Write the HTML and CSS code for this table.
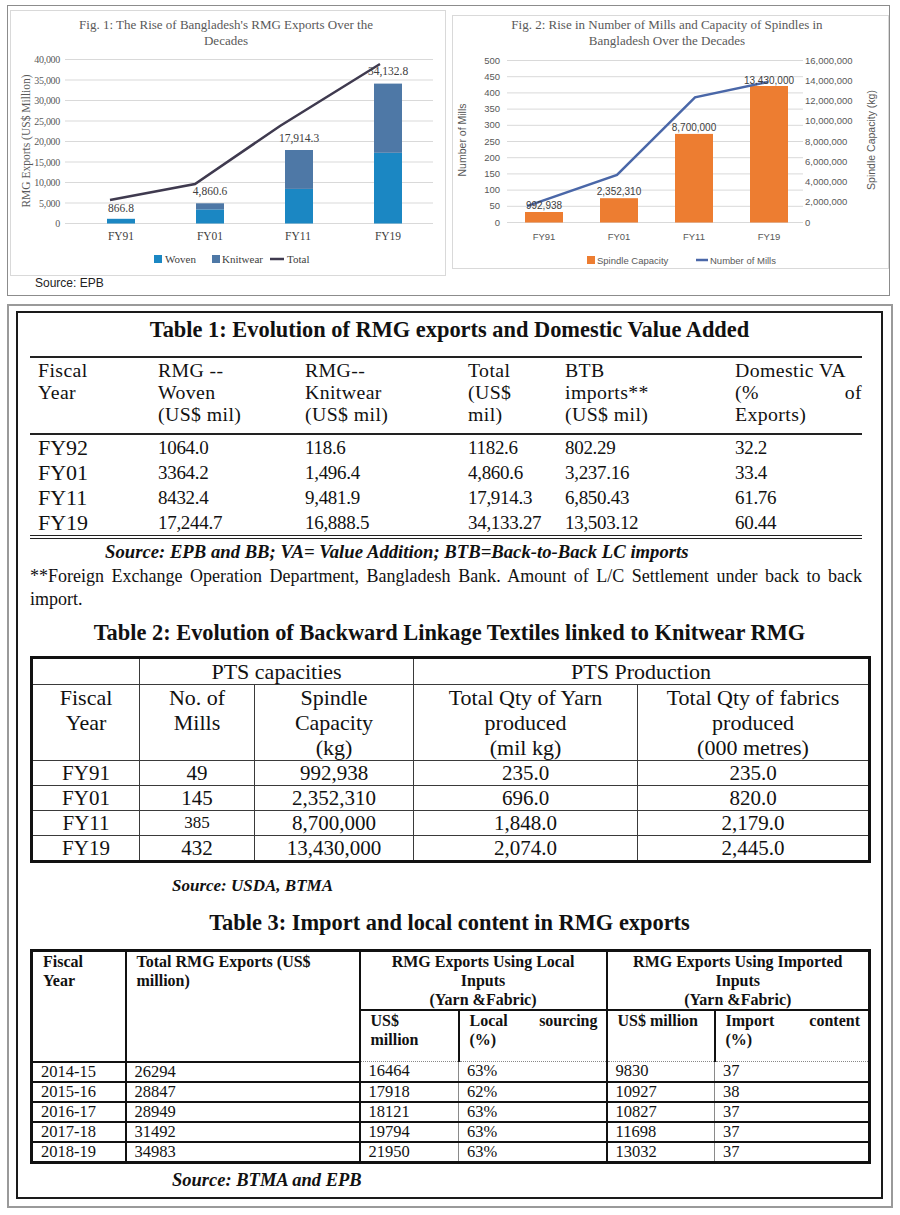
FILE: index.html
```html
<!DOCTYPE html>
<html lang="en">
<head>
<meta charset="utf-8">
<title>RMG exports</title>
<link rel="stylesheet" href="styles.css">
</head>
<body>
<div class="page">
  <div class="fig-frame">
    <div class="fig1">
      <svg class="chart" width="436" height="266" viewBox="0 0 436 266">
        <rect class="chart-box" x="0.5" y="0.5" width="435" height="265"/>
        <text class="c1-title" x="216" y="19">Fig. 1: The Rise of Bangladesh's RMG Exports Over the</text>
        <text class="c1-title" x="216" y="35">Decades</text>
        <g class="grid">
          <line x1="55" x2="423" y1="213.5" y2="213.5"/>
          <line x1="55" x2="423" y1="193" y2="193"/>
          <line x1="55" x2="423" y1="172.5" y2="172.5"/>
          <line x1="55" x2="423" y1="152" y2="152"/>
          <line x1="55" x2="423" y1="131.5" y2="131.5"/>
          <line x1="55" x2="423" y1="111" y2="111"/>
          <line x1="55" x2="423" y1="90.5" y2="90.5"/>
          <line x1="55" x2="423" y1="70" y2="70"/>
          <line x1="55" x2="423" y1="49.5" y2="49.5"/>
        </g>
        <g class="c1-ylab">
          <text x="50" y="217">0</text>
          <text x="50" y="196.5">5,000</text>
          <text x="50" y="176">10,000</text>
          <text x="50" y="155.5">15,000</text>
          <text x="50" y="135">20,000</text>
          <text x="50" y="114.5">25,000</text>
          <text x="50" y="94">30,000</text>
          <text x="50" y="73.5">35,000</text>
          <text x="50" y="53">40,000</text>
        </g>
        <text class="c1-axis-title" transform="translate(20,131) rotate(-90)">RMG Exports (US$ Million)</text>
        <rect class="woven" x="97" y="208.8" width="28" height="4.7"/>
        <rect class="woven" x="186" y="199.4" width="28" height="14.1"/>
        <rect class="knit" x="186" y="193.3" width="28" height="6.1"/>
        <rect class="woven" x="275" y="178.9" width="28" height="34.6"/>
        <rect class="knit" x="275" y="140" width="28" height="38.9"/>
        <rect class="woven" x="364" y="142.8" width="28" height="70.7"/>
        <rect class="knit" x="364" y="73.6" width="28" height="69.2"/>
        <polyline class="total-line" points="100,190 185,174 270,116 370,54"/>
        <g class="c1-val">
          <text x="111" y="202">866.8</text>
          <text x="200" y="185">4,860.6</text>
          <text x="289" y="132">17,914.3</text>
          <text x="378" y="65">34,132.8</text>
        </g>
        <g class="c1-xlab">
          <text x="111" y="230">FY91</text>
          <text x="200" y="230">FY01</text>
          <text x="288" y="230">FY11</text>
          <text x="378" y="230">FY19</text>
        </g>
        <rect class="woven" x="144" y="245" width="8" height="8"/>
        <text class="c1-leg" x="155" y="253">Woven</text>
        <rect class="knit" x="202" y="245" width="8" height="8"/>
        <text class="c1-leg" x="212" y="253">Knitwear</text>
        <line class="total-line" x1="260" x2="274" y1="249" y2="249"/>
        <text class="c1-leg" x="277" y="253">Total</text>
      </svg>
      <div class="fig-source">Source: EPB</div>
    </div>
    <div class="fig2">
      <svg class="chart" width="437" height="254" viewBox="0 0 437 254">
        <rect class="chart-box" x="0.5" y="0.5" width="436" height="253"/>
        <text class="c1-title" x="215" y="14">Fig. 2: Rise in Number of Mills and Capacity of Spindles in</text>
        <text class="c1-title" x="215" y="30">Bangladesh Over the Decades</text>
        <g class="grid">
          <line x1="55" x2="351" y1="207.5" y2="207.5"/>
          <line x1="55" x2="351" y1="191.3" y2="191.3"/>
          <line x1="55" x2="351" y1="175.1" y2="175.1"/>
          <line x1="55" x2="351" y1="158.9" y2="158.9"/>
          <line x1="55" x2="351" y1="142.7" y2="142.7"/>
          <line x1="55" x2="351" y1="126.5" y2="126.5"/>
          <line x1="55" x2="351" y1="110.3" y2="110.3"/>
          <line x1="55" x2="351" y1="94.1" y2="94.1"/>
          <line x1="55" x2="351" y1="77.9" y2="77.9"/>
          <line x1="55" x2="351" y1="61.7" y2="61.7"/>
          <line x1="55" x2="351" y1="45.5" y2="45.5"/>
        </g>
        <g class="c2-ylab">
          <text x="48" y="210.5">0</text>
          <text x="48" y="194.3">50</text>
          <text x="48" y="178.1">100</text>
          <text x="48" y="161.9">150</text>
          <text x="48" y="145.7">200</text>
          <text x="48" y="129.5">250</text>
          <text x="48" y="113.3">300</text>
          <text x="48" y="97.1">350</text>
          <text x="48" y="80.9">400</text>
          <text x="48" y="64.7">450</text>
          <text x="48" y="48.5">500</text>
        </g>
        <g class="c2-rlab">
          <text x="353" y="210.5">0</text>
          <text x="353" y="190.25">2,000,000</text>
          <text x="353" y="170">4,000,000</text>
          <text x="353" y="149.75">6,000,000</text>
          <text x="353" y="129.5">8,000,000</text>
          <text x="353" y="109.25">10,000,000</text>
          <text x="353" y="89">12,000,000</text>
          <text x="353" y="68.75">14,000,000</text>
          <text x="353" y="48.5">16,000,000</text>
        </g>
        <text class="c2-axis-title" transform="translate(14,125) rotate(-90)">Number of Mills</text>
        <text class="c2-axis-title" transform="translate(423,125) rotate(-90)">Spindle Capacity (kg)</text>
        <rect class="spindle" x="73" y="197" width="38" height="10.5"/>
        <rect class="spindle" x="148" y="183.2" width="38" height="24.3"/>
        <rect class="spindle" x="223" y="118.9" width="38" height="88.6"/>
        <rect class="spindle" x="298" y="71" width="38" height="136.5"/>
        <polyline class="mills-line" points="75,191.1 165,160 243,82.3 316,67"/>
        <g class="c2-val">
          <text x="92" y="194">992,938</text>
          <text x="167" y="180">2,352,310</text>
          <text x="242" y="116">8,700,000</text>
          <text x="317" y="69">13,430,000</text>
        </g>
        <g class="c2-xlab">
          <text x="92" y="225">FY91</text>
          <text x="167" y="225">FY01</text>
          <text x="242" y="225">FY11</text>
          <text x="317" y="225">FY19</text>
        </g>
        <rect class="spindle" x="135" y="241" width="8" height="8"/>
        <text class="c2-leg" x="145" y="249">Spindle Capacity</text>
        <line class="mills-line" x1="244" x2="256" y1="245" y2="245"/>
        <text class="c2-leg" x="258" y="249">Number of Mills</text>
      </svg>
    </div>
  </div>

  <div class="table-frame">
    <div class="table-inner">
      <div class="tbl-title">Table 1: Evolution of RMG exports and Domestic Value Added</div>
      <table class="t1">
        <colgroup>
          <col class="w120"><col class="w147"><col class="w163"><col class="w97"><col class="w170"><col class="w135">
        </colgroup>
        <thead>
          <tr>
            <th>Fiscal<br>Year</th>
            <th>RMG --<br>Woven<br>(US$ mil)</th>
            <th>RMG--<br>Knitwear<br>(US$ mil)</th>
            <th>Total<br>(US$<br>mil)</th>
            <th>BTB<br>imports**<br>(US$ mil)</th>
            <th class="last">Domestic VA<br><span class="just"><span>(%</span><span>of</span></span>Exports)</th>
          </tr>
        </thead>
        <tbody>
          <tr><td class="fy">FY92</td><td>1064.0</td><td>118.6</td><td>1182.6</td><td>802.29</td><td>32.2</td></tr>
          <tr><td class="fy">FY01</td><td>3364.2</td><td>1,496.4</td><td>4,860.6</td><td>3,237.16</td><td>33.4</td></tr>
          <tr><td class="fy">FY11</td><td>8432.4</td><td>9,481.9</td><td>17,914.3</td><td>6,850.43</td><td>61.76</td></tr>
          <tr><td class="fy">FY19</td><td>17,244.7</td><td>16,888.5</td><td>34,133.27</td><td>13,503.12</td><td>60.44</td></tr>
        </tbody>
      </table>
      <div class="src src1">Source: EPB and BB; VA= Value Addition; BTB=Back-to-Back LC imports</div>
      <p class="note">**Foreign Exchange Operation Department, Bangladesh Bank. Amount of L/C Settlement under back to back import.</p>

      <div class="tbl-title title2">Table 2: Evolution of Backward Linkage Textiles linked to Knitwear RMG</div>
      <table class="t2">
        <colgroup>
          <col class="w108"><col class="w115"><col class="w159"><col class="w224"><col class="w232">
        </colgroup>
        <thead>
          <tr class="grp-row"><th></th><th colspan="2">PTS capacities</th><th colspan="2">PTS Production</th></tr>
          <tr class="head-row">
            <th>Fiscal<br>Year</th>
            <th>No. of<br>Mills</th>
            <th>Spindle<br>Capacity<br>(kg)</th>
            <th>Total Qty of Yarn<br>produced<br>(mil kg)</th>
            <th>Total Qty of fabrics<br>produced<br>(000 metres)</th>
          </tr>
        </thead>
        <tbody>
          <tr><td>FY91</td><td>49</td><td>992,938</td><td>235.0</td><td>235.0</td></tr>
          <tr><td>FY01</td><td>145</td><td>2,352,310</td><td>696.0</td><td>820.0</td></tr>
          <tr><td>FY11</td><td class="small">385</td><td>8,700,000</td><td>1,848.0</td><td>2,179.0</td></tr>
          <tr><td>FY19</td><td>432</td><td>13,430,000</td><td>2,074.0</td><td>2,445.0</td></tr>
        </tbody>
      </table>
      <div class="src src2">Source: USDA, BTMA</div>

      <div class="tbl-title title3">Table 3: Import and local content in RMG exports</div>
      <table class="t3">
        <colgroup>
          <col class="w94"><col class="w234"><col class="w99"><col class="w148"><col class="w108"><col class="w155">
        </colgroup>
        <thead>
          <tr class="grp-row">
            <th rowspan="2">Fiscal<br>Year</th>
            <th rowspan="2">Total RMG Exports (US$<br>million)</th>
            <th colspan="2" class="grp">RMG Exports Using Local<br>Inputs<br>(Yarn &amp;Fabric)</th>
            <th colspan="2" class="grp">RMG Exports Using Imported<br>Inputs<br>(Yarn &amp;Fabric)</th>
          </tr>
          <tr class="sub-row">
            <th>US$<br>million</th>
            <th class="light"><span class="just"><span>Local</span><span>sourcing</span></span>(%)</th>
            <th>US$ million</th>
            <th class="light"><span class="just"><span>Import</span><span>content</span></span>(%)</th>
          </tr>
        </thead>
        <tbody>
          <tr><td>2014-15</td><td>26294</td><td>16464</td><td class="light">63%</td><td>9830</td><td class="light">37</td></tr>
          <tr><td>2015-16</td><td>28847</td><td>17918</td><td class="light">62%</td><td>10927</td><td class="light">38</td></tr>
          <tr><td>2016-17</td><td>28949</td><td>18121</td><td class="light">63%</td><td>10827</td><td class="light">37</td></tr>
          <tr><td>2017-18</td><td>31492</td><td>19794</td><td class="light">63%</td><td>11698</td><td class="light">37</td></tr>
          <tr><td>2018-19</td><td>34983</td><td>21950</td><td class="light">63%</td><td>13032</td><td class="light">37</td></tr>
        </tbody>
      </table>
      <div class="src src3">Source: BTMA and EPB</div>
    </div>
  </div>
</div>
</body>
</html>
```

FILE: styles.css
```css
* { box-sizing: border-box; }

body {
  margin: 0;
  background: #fff;
  color: #111;
  font-family: "Liberation Serif", "Times New Roman", serif;
}

.page { width: 900px; }

/* ---------- charts ---------- */
.fig-frame {
  margin: 5px 0 0 7px;
  width: 883px;
  height: 291px;
  border: 1px solid #8c8c8c;
  display: flex;
  align-items: flex-start;
}
.fig1 { margin: 4px 0 0 2px; width: 436px; }
.fig2 { margin: 9px 0 0 6px; }
.chart { display: block; }

.fig-source {
  margin-left: 25px;
  font-family: "Liberation Sans", Arial, sans-serif;
  font-size: 12px;
  line-height: 14px;
  color: #222;
}

.chart-box { fill: #fff; stroke: #d9d9d9; stroke-width: 1; }
.grid line { stroke: #d9d9d9; stroke-width: 1; }

.c1-title {
  font-family: "Liberation Serif", serif;
  font-size: 13px;
  fill: #595959;
  text-anchor: middle;
}
.c1-ylab text {
  font-family: "Liberation Serif", serif;
  font-size: 10px;
  letter-spacing: -0.3px;
  fill: #595959;
  text-anchor: end;
}
.c1-axis-title {
  font-family: "Liberation Serif", serif;
  font-size: 11.5px;
  fill: #595959;
  text-anchor: middle;
}
.c1-val text {
  font-family: "Liberation Serif", serif;
  font-size: 11.5px;
  fill: #404040;
  text-anchor: middle;
}
.c1-xlab text {
  font-family: "Liberation Serif", serif;
  font-size: 11.5px;
  fill: #404040;
  text-anchor: middle;
}
.c1-leg {
  font-family: "Liberation Serif", serif;
  font-size: 11px;
  fill: #404040;
}
.woven { fill: #1b87c3; }
.knit { fill: #4e78a6; }
.total-line { fill: none; stroke: #3f3a4f; stroke-width: 2.5; }

.c2-ylab text, .c2-rlab text {
  font-family: "Liberation Sans", Arial, sans-serif;
  font-size: 9.5px;
  fill: #595959;
}
.c2-ylab text { text-anchor: end; }
.c2-rlab text { text-anchor: start; }
.c2-axis-title {
  font-family: "Liberation Sans", Arial, sans-serif;
  font-size: 10.5px;
  fill: #595959;
  text-anchor: middle;
}
.c2-val text {
  font-family: "Liberation Sans", Arial, sans-serif;
  font-size: 10px;
  fill: #404040;
  text-anchor: middle;
}
.c2-xlab text {
  font-family: "Liberation Sans", Arial, sans-serif;
  font-size: 9.5px;
  fill: #595959;
  text-anchor: middle;
}
.c2-leg {
  font-family: "Liberation Sans", Arial, sans-serif;
  font-size: 9.5px;
  fill: #595959;
}
.spindle { fill: #ed7d31; }
.mills-line { fill: none; stroke: #4a67a8; stroke-width: 2.5; }

/* ---------- tables frame ---------- */
.table-frame {
  margin: 8px 0 0 7px;
  width: 886px;
  height: 904px;
  border: 2px solid #9a9a9a;
  padding: 5px 8px 7px 7px;
}
.table-inner {
  height: 100%;
  border: 2px solid #1a1a1a;
  padding: 5px 12px 0 12px;
}

.tbl-title {
  font-weight: bold;
  font-size: 22.4px;
  line-height: 24px;
  text-align: center;
  color: #111;
}
.title2 { margin-top: 10px; }
.title3 { margin-top: 14px; }

.src {
  font-weight: bold;
  font-style: italic;
  font-size: 18.7px;
  line-height: 22px;
}
.src1 { margin-top: 2px; padding-left: 75px; }
.src2 { margin-top: 12px; padding-left: 142px; font-size: 17px; }
.src3 { margin-top: 5px; padding-left: 142px; font-size: 18.5px; }

.note {
  margin: 2px 0 0 0;
  width: 832px;
  font-size: 18px;
  line-height: 23px;
  text-align: justify;
}

.just { display: flex; justify-content: space-between; }

/* column widths */
.w94 { width: 94px; }
.w97 { width: 97px; }
.w99 { width: 99px; }
.w108 { width: 108px; }
.w115 { width: 115px; }
.w120 { width: 120px; }
.w135 { width: 135px; }
.w147 { width: 147px; }
.w148 { width: 148px; }
.w155 { width: 155px; }
.w159 { width: 159px; }
.w163 { width: 163px; }
.w170 { width: 170px; }
.w224 { width: 224px; }
.w232 { width: 232px; }
.w234 { width: 234px; }

/* ---------- table 1 ---------- */
.t1 {
  margin-top: 14px;
  width: 832px;
  table-layout: fixed;
  border-collapse: separate;
  border-spacing: 0;
  border-top: 2px solid #222;
  border-bottom: 4px double #222;
}
.t1 th {
  font-weight: normal;
  font-size: 19.8px;
  letter-spacing: 0.4px;
  line-height: 22px;
  text-align: left;
  vertical-align: top;
  padding: 1px 8px 8px 8px;
  border-bottom: 2px solid #222;
}
.t1 th.last { padding-right: 0; }
.t1 td {
  height: 25px;
  padding: 0 8px;
  font-size: 19px;
  line-height: 25px;
  letter-spacing: -0.3px;
}
.t1 td.fy { font-size: 22px; letter-spacing: 0; }

/* ---------- table 2 ---------- */
.t2 {
  margin-top: 11px;
  width: 838px;
  table-layout: fixed;
  border-collapse: collapse;
  border: 3px solid #111;
}
.t2 th, .t2 td {
  border: 1px solid #3a3a3a;
  padding: 0;
  text-align: center;
  vertical-align: top;
  font-weight: normal;
}
.t2 th { font-size: 22px; line-height: 25px; }
.t2 .grp-row th { height: 27px; }
.t2 td { font-size: 21px; line-height: 24px; height: 25px; }
.t2 td.small { font-size: 17px; }

/* ---------- table 3 ---------- */
.t3 {
  margin-top: 14px;
  width: 838px;
  table-layout: fixed;
  border-collapse: collapse;
  border: 3px solid #111;
}
.t3 th {
  font-size: 16px;
  line-height: 19px;
  font-weight: bold;
  text-align: left;
  vertical-align: top;
  padding: 0 8px 0 10px;
  border: 2px solid #111;
}
.t3 th.grp { text-align: center; padding: 0 6px; height: 59px; }
.t3 .sub-row th { padding-bottom: 12px; border-bottom: 1px dotted #888; }
.t3 th.light, .t3 td.light { border-left: 1px solid #8a8a8a; }
.t3 td {
  height: 19px;
  padding: 0 8px;
  font-size: 16.5px;
  line-height: 18px;
  border-top: 2px solid #111;
  border-bottom: 2px solid #111;
  border-left: 2px solid #111;
}
.t3 tbody tr:first-child td { border-top: 1px dotted #888; }
```
